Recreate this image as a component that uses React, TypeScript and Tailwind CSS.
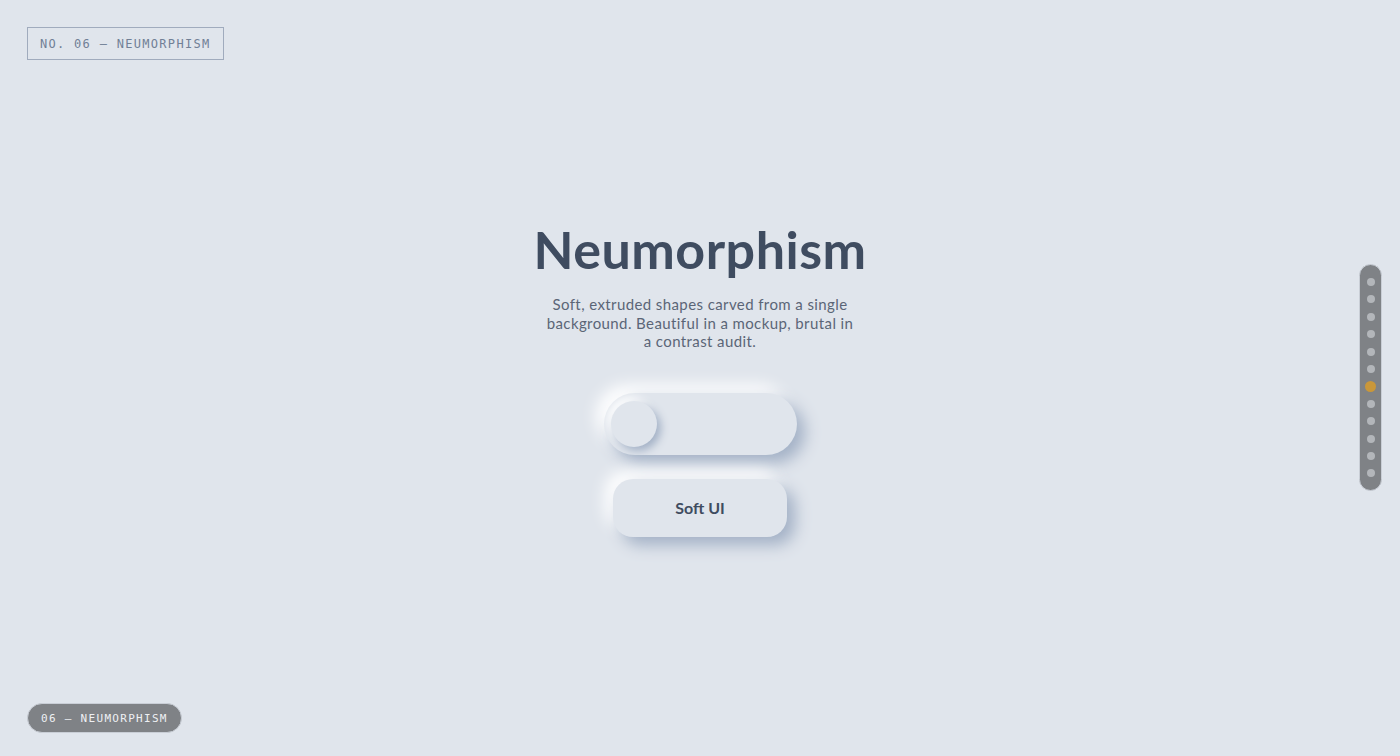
import React, { useState } from 'react';

const slides = 12;
const current = 6;

// raised soft surfaces
const raised = 'shadow-[8px_8px_16px_#a3b1c6,-8px_-8px_16px_#ffffff]';

export default function App() {
  const [on, setOn] = useState(false);

  return (
    <div className="relative h-[756px] w-full overflow-hidden bg-[#e0e5ec] font-['Lato',sans-serif]">
      {/* top-left label */}
      <div className="absolute left-[27px] top-[27px] flex h-[33px] items-center border border-[#a0abbd] px-[12px] font-['DejaVu_Sans_Mono',monospace] text-[12px] leading-none tracking-[1.3px] text-[#718096]">
        NO. 06 — NEUMORPHISM
      </div>

      {/* centre column */}
      <div className="flex h-full flex-col items-center justify-center pt-[2px]">
        <h1 className="text-[52px] font-bold leading-[56px] tracking-[0.5px] text-[#3f4c60]">Neumorphism</h1>
        <p className="mt-[18px] w-[312px] text-center text-[15px] leading-[18.5px] tracking-[0.4px] text-[#5b6577]">
          Soft, extruded shapes carved from a single background. Beautiful in a mockup, brutal in a contrast audit.
        </p>

        <button
          onClick={() => setOn(!on)}
          className={`mt-[42px] flex h-[62px] w-[193px] items-center rounded-full bg-[#e0e5ec] px-[7px] ${raised}`}
        >
          <span
            className={`block h-[46px] w-[46px] rounded-full bg-[#e0e5ec] shadow-[4px_4px_8px_#a3b1c6,-4px_-4px_8px_#ffffff] transition-transform ${on ? 'translate-x-[133px]' : ''}`}
          />
        </button>

        <button
          className={`mt-[24px] h-[58px] w-[174px] rounded-[20px] bg-[#e0e5ec] text-[16px] font-bold text-[#3f4c60] ${raised}`}
        >
          Soft UI
        </button>
      </div>

      {/* slide rail */}
      <div className="absolute right-[18px] top-[264px] flex w-[23px] flex-col items-center gap-[9.4px] rounded-full border border-[#c9ced6] bg-[#7f8286] py-[13px]">
        {Array.from({ length: slides }).map((_, i) => (
          <span
            key={i}
            className={i === current ? 'h-[11px] w-[11px] -my-[1.5px] rounded-full bg-[#c9973a]' : 'h-[8px] w-[8px] rounded-full bg-[#b3b6ba]'}
          />
        ))}
      </div>

      {/* bottom-left badge */}
      <div className="absolute bottom-[23px] left-[27px] flex h-[30px] items-center rounded-full border border-[#c9ced6] bg-[#7f8286] px-[13px] pt-[1px] font-['DejaVu_Sans_Mono',monospace] text-[11px] leading-none tracking-[1.3px] text-[#eef0f3]">
        06 — NEUMORPHISM
      </div>
    </div>
  );
}
